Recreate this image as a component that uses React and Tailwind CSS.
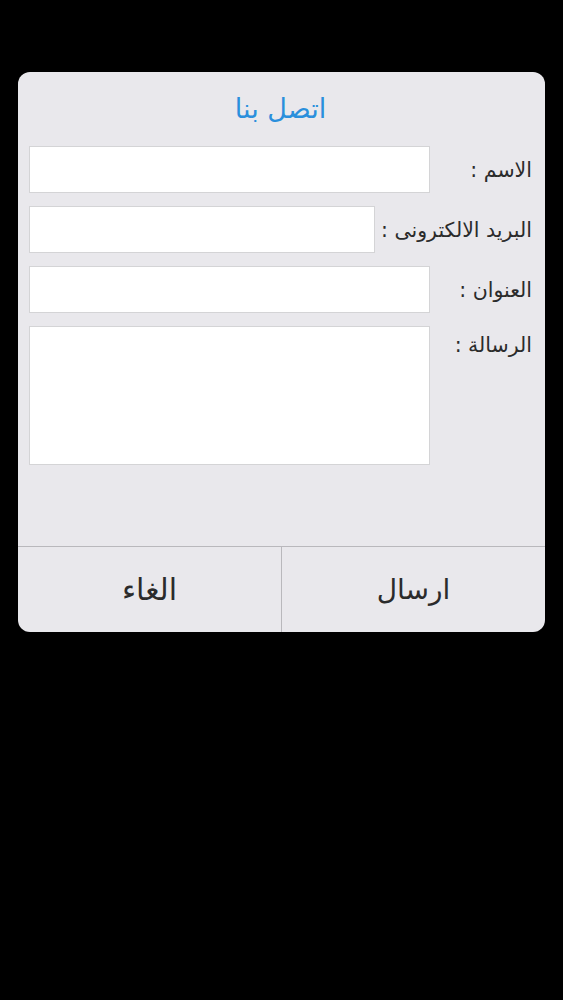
import React from 'react';

const Field = ({ label, tall }) => (
  <div className={`flex gap-[6px] ${tall ? 'items-start' : 'items-center'}`}>
    <label className={`shrink-0 min-w-[96px] text-[20.5px] leading-[30px] text-[#2b2b2b] whitespace-nowrap ${tall ? 'pt-[4px]' : ''}`}>
      {label} :
    </label>
    <div className={`flex-1 bg-white border border-[#d4d4d6] ${tall ? 'h-[139px]' : 'h-[47px]'}`} />
  </div>
);

const App = () => {
  return (
    <div className="w-full min-h-screen bg-black pt-[72px] px-[18px]" style={{ fontFamily: '"DejaVu Sans", "Noto Sans", sans-serif' }}>
      <div dir="rtl" className="w-[527px] h-[560px] bg-[#e9e8ec] rounded-[12px] overflow-hidden flex flex-col">
        <div className="flex-1 pr-[13px] pl-[11px]">
          <h1 className="text-center text-[#2a8fdc] text-[27px] leading-[36px] pt-[19px] pb-[19px]">اتصل بنا</h1>
          <div className="flex flex-col gap-[13px]">
            <Field label="الاسم" />
            <Field label="البريد الالكترونى" />
            <Field label="العنوان" />
            <Field label="الرسالة" tall />
          </div>
        </div>
        <div className="h-[86px] border-t border-[#b9b8bc] flex">
          <button className="flex-1 text-[28px] text-[#2b2b2b] border-l border-[#b9b8bc]">ارسال</button>
          <button className="flex-1 text-[30px] text-[#2b2b2b]">الغاء</button>
        </div>
      </div>
    </div>
  );
};

export default App;
